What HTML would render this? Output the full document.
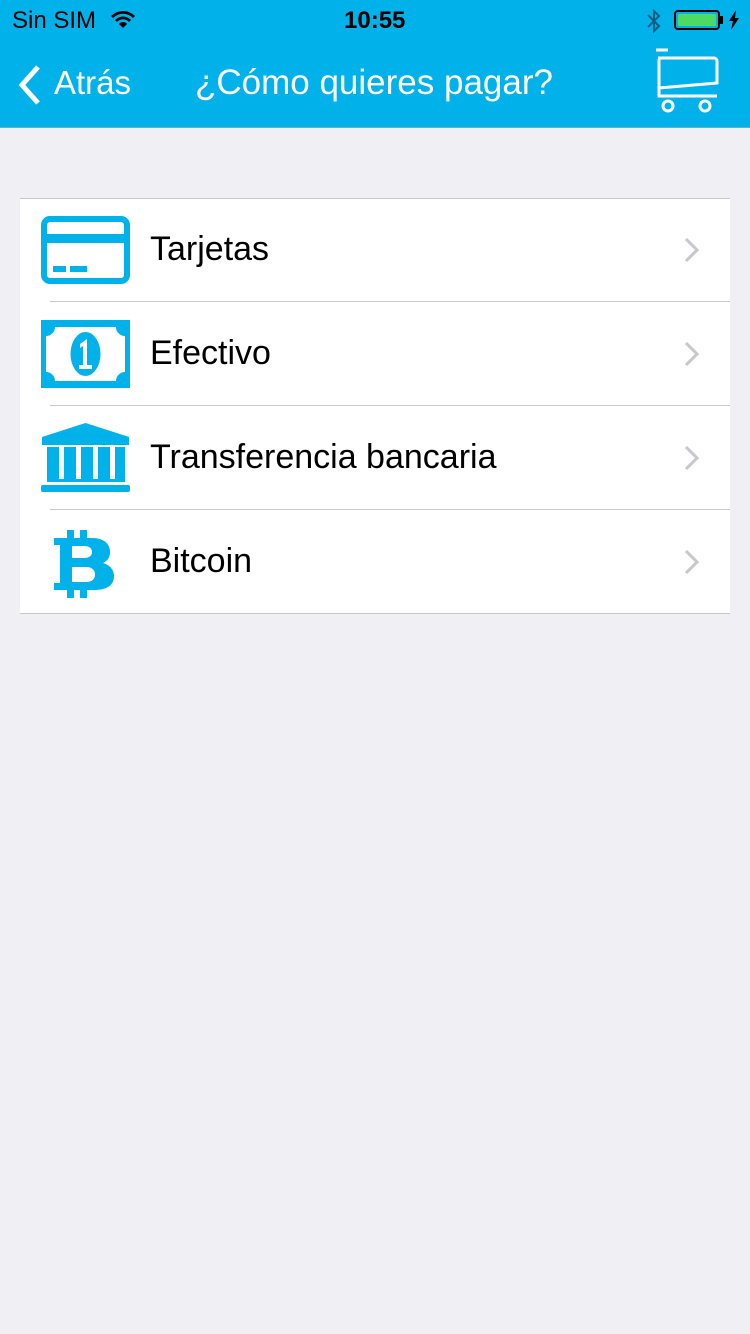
<!DOCTYPE html>
<html><head><meta charset="utf-8"><style>
*{margin:0;padding:0;box-sizing:border-box}
body{width:750px;height:1334px;background:#efeff4;font-family:"Liberation Sans",sans-serif;position:relative;overflow:hidden}
.nav{position:absolute;left:0;top:0;width:750px;height:128px;background:#00b1ea;border-bottom:1px solid #4fb8d8}
.t{position:absolute;white-space:nowrap}
.list{position:absolute;left:20px;top:198px;width:710px;height:416px;background:#fff;border-top:1px solid #c8c7cc;border-bottom:1px solid #c8c7cc}
.sep{position:absolute;left:30px;right:0;height:1px;background:#c8c7cc}
.lbl{position:absolute;left:130px;font-size:34px;color:#000}
.chev{position:absolute;left:664px}
</style></head><body>
<div class="nav">
<div class="t" style="left:12px;top:7px;font-size:24px;color:#000">Sin SIM</div>
<svg style="position:absolute;left:110px;top:9px" width="26" height="20" viewBox="0 0 26 20"><path d="M1 7a17 17 0 0 1 24 0l-2 2a14 14 0 0 0-20 0z M5 11a11 11 0 0 1 16 0l-2 2a8 8 0 0 0-12 0z M9 15a5 5 0 0 1 8 0l-4 4z" fill="#000"/></svg>
<div class="t" style="left:344px;top:7px;font-size:24px;font-weight:bold;color:#000">10:55</div>
<svg style="position:absolute;left:645px;top:8px" width="18" height="26" viewBox="0 0 18 26"><path d="M3 7l11 11-5 5V3l5 5L3 19" fill="none" stroke="#0a5f80" stroke-width="2"/></svg>
<div style="position:absolute;left:674px;top:10px;width:46px;height:20px;border:2px solid #000;border-radius:4px;padding:2px"><div style="width:100%;height:100%;background:#4cd964;border-radius:1px"></div></div>
<div style="position:absolute;left:720px;top:16px;width:3px;height:8px;background:#000"></div>
<svg style="position:absolute;left:728px;top:10px" width="12" height="20" viewBox="0 0 12 20"><path d="M8 0L1 11h4l-2 9 8-12H7z" fill="#000"/></svg>
<svg style="position:absolute;left:16px;top:64px" width="28" height="42" viewBox="0 0 28 42"><path d="M22 3L6 21l16 18" fill="none" stroke="#fff" stroke-width="5"/></svg>
<div class="t" style="left:54px;top:64px;font-size:33px;color:#fff">Atrás</div>
<div class="t" style="left:195px;top:63px;font-size:35px;color:#fff">¿Cómo quieres pagar?</div>
<svg style="position:absolute;left:652px;top:46px" width="70" height="70" viewBox="0 0 70 70"><path d="M4 4h12" stroke="#fff" stroke-width="3"/><path d="M6 12h56a3 3 0 0 1 3 3v22L7 42V14a2 2 0 0 1 2-2" fill="none" stroke="#fff" stroke-width="3"/><path d="M7 42v8h58" fill="none" stroke="#fff" stroke-width="3"/><circle cx="16" cy="60" r="5" fill="none" stroke="#fff" stroke-width="3"/><circle cx="53" cy="60" r="5" fill="none" stroke="#fff" stroke-width="3"/></svg>
</div>
<div class="list">
<svg style="position:absolute;left:21px;top:17px" width="89" height="68" viewBox="0 0 89 68"><rect x="3" y="3" width="83" height="62" rx="6" fill="none" stroke="#00b1ea" stroke-width="6"/><rect x="3" y="18" width="83" height="9" fill="#00b1ea"/><rect x="12" y="50" width="13" height="6" fill="#00b1ea"/><rect x="29" y="50" width="17" height="6" fill="#00b1ea"/></svg>
<div class="lbl" style="top:31px">Tarjetas</div>
<svg class="chev" style="top:38px" width="16" height="26" viewBox="0 0 16 26"><path d="M2 2l11 11L2 24" fill="none" stroke="#c7c7cc" stroke-width="3"/></svg>
<div class="sep" style="top:102px"></div>
<svg style="position:absolute;left:21px;top:121px" width="89" height="68" viewBox="0 0 89 68"><path fill="#00b1ea" fill-rule="evenodd" d="M0 0h89v68H0z M14 7h61a9 9 0 0 0 9 9v36a9 9 0 0 0-9 9H14a9 9 0 0 0-9-9V16a9 9 0 0 0 9-9z"/><ellipse cx="44.5" cy="34" rx="15" ry="22" fill="#00b1ea"/><path d="M39 24l7-5v26h5v4H38v-4h4V26l-3 2z" fill="#fff"/></svg>
<div class="lbl" style="top:135px">Efectivo</div>
<svg class="chev" style="top:142px" width="16" height="26" viewBox="0 0 16 26"><path d="M2 2l11 11L2 24" fill="none" stroke="#c7c7cc" stroke-width="3"/></svg>
<div class="sep" style="top:206px"></div>
<svg style="position:absolute;left:21px;top:224px" width="89" height="70" viewBox="0 0 89 70"><path d="M44.5 0L88 14v8H1v-8z" fill="#00b1ea"/><rect x="6" y="24" width="12" height="32" fill="#00b1ea"/><rect x="23" y="24" width="12" height="32" fill="#00b1ea"/><rect x="40" y="24" width="12" height="32" fill="#00b1ea"/><rect x="57" y="24" width="12" height="32" fill="#00b1ea"/><rect x="74" y="24" width="10" height="32" fill="#00b1ea"/><rect x="6" y="56" width="78" height="3" fill="#00b1ea"/><rect x="0" y="62" width="89" height="7" rx="2" fill="#00b1ea"/></svg>
<div class="lbl" style="top:239px">Transferencia bancaria</div>
<svg class="chev" style="top:246px" width="16" height="26" viewBox="0 0 16 26"><path d="M2 2l11 11L2 24" fill="none" stroke="#c7c7cc" stroke-width="3"/></svg>
<div class="sep" style="top:310px"></div>
<svg style="position:absolute;left:32px;top:331px" width="68" height="68" viewBox="0 0 68 68"><path fill="#00b1ea" fill-rule="evenodd" d="M15 0h7v8h6V0h7v8h5c12 0 18 6 18 14 0 6-3 9-7 11 7 2 11 7 11 13 0 10-8 14-20 14h-7v8h-7v-8h-6v8h-7v-8H2v-7h6V15H2V8h13z M20 16v12h12c5 0 8-2 8-6s-3-6-8-6z M20 37v15h14c6 0 9-3 9-7.5S40 37 34 37z"/></svg>
<div class="lbl" style="top:343px">Bitcoin</div>
<svg class="chev" style="top:350px" width="16" height="26" viewBox="0 0 16 26"><path d="M2 2l11 11L2 24" fill="none" stroke="#c7c7cc" stroke-width="3"/></svg>
</div>
</body></html>
